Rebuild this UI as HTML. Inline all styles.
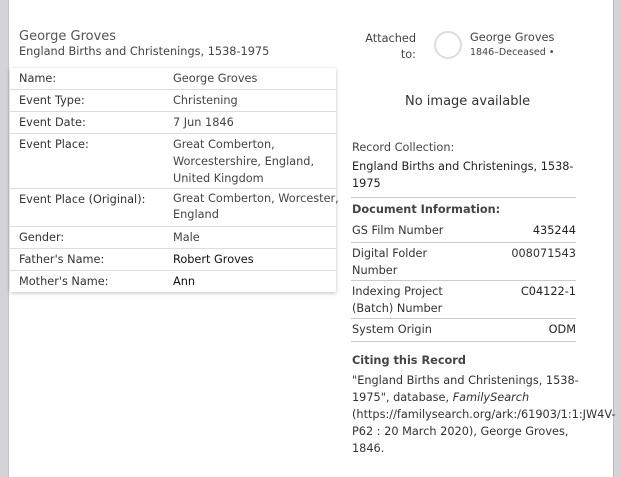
<!DOCTYPE html>
<html><head><style>
body{margin:0;width:621px;height:477px;overflow:hidden;background:#fff;font-family:"DejaVu Sans","Liberation Sans",sans-serif;font-size:11.3px;color:#333;position:relative}
.l{position:absolute;left:0;top:0;width:8px;height:477px;background:#d4d4d8;border-right:1px solid #c4c4c8}
.r{position:absolute;right:0;top:0;width:7px;height:477px;background:#d4d4d8;border-left:1px solid #bbb}
.a{position:absolute;white-space:nowrap}
.tbl{position:absolute;left:10px;top:68px;width:326px;box-shadow:0 1px 4px rgba(0,0,0,.25);background:#fff}
.row{position:relative;border-bottom:1px solid #ddd;line-height:18px;padding:2px 0 1px}
.row:last-child{border-bottom:none}
.row .k{position:absolute;left:9px;top:2px;white-space:nowrap}
.row .v{margin-left:163px;color:#444;white-space:nowrap}
.hr{position:absolute;left:351px;width:225px;border-top:1px solid #ccc}
</style></head><body>
<div class="l"></div><div class="r"></div>
<div class="a" style="left:19px;top:29px;font-size:13px;color:#555">George Groves</div>
<div class="a" style="left:19px;top:45px;color:#444">England Births and Christenings, 1538-1975</div>
<div class="tbl">
<div class="row"><span class="k">Name:</span><div class="v">George Groves</div></div>
<div class="row"><span class="k">Event Type:</span><div class="v">Christening</div></div>
<div class="row"><span class="k">Event Date:</span><div class="v">7 Jun 1846</div></div>
<div class="row"><span class="k">Event Place:</span><div class="v" style="line-height:17px">Great Comberton,<br>Worcestershire, England,<br>United Kingdom</div></div>
<div class="row"><span class="k">Event Place (Original):</span><div class="v" style="line-height:16px;padding-bottom:2px">Great Comberton, Worcester,<br>England</div></div>
<div class="row"><span class="k">Gender:</span><div class="v">Male</div></div>
<div class="row"><span class="k">Father's Name:</span><div class="v" style="color:#111">Robert Groves</div></div>
<div class="row"><span class="k">Mother's Name:</span><div class="v" style="color:#111">Ann</div></div>
</div>
<div class="a" style="left:362px;top:31px;width:54px;text-align:right;line-height:16px;color:#444">Attached<br>to:</div>
<div class="a" style="left:434px;top:31px;width:24px;height:24px;border:2px solid #ddd;border-radius:50%"></div>
<div class="a" style="left:470px;top:31px;color:#444">George Groves</div>
<div class="a" style="left:470px;top:47px;font-size:9.5px;color:#444">1846–Deceased •</div>
<div class="a" style="left:405px;top:94px;font-size:13px;color:#333">No image available</div>
<div class="a" style="left:352px;top:141px;color:#444">Record Collection:</div>
<div class="a" style="left:352px;top:158px;line-height:17px;color:#222">England Births and Christenings, 1538-<br>1975</div>
<div class="hr" style="top:197px"></div>
<div class="a" style="left:352px;top:203px;font-weight:bold;color:#444">Document Information:</div>
<div class="a" style="left:352px;top:224px">GS Film Number</div><div class="a" style="right:45px;top:224px;color:#222">435244</div>
<div class="hr" style="top:242px"></div>
<div class="a" style="left:352px;top:245px;line-height:17px">Digital Folder<br>Number</div><div class="a" style="right:45px;top:245px;line-height:17px">008071543</div>
<div class="hr" style="top:280px"></div>
<div class="a" style="left:352px;top:283px;line-height:17px">Indexing Project<br>(Batch) Number</div><div class="a" style="right:45px;top:283px;line-height:17px;color:#222">C04122-1</div>
<div class="hr" style="top:318px"></div>
<div class="a" style="left:352px;top:323px">System Origin</div><div class="a" style="right:45px;top:323px;color:#222">ODM</div>
<div class="hr" style="top:341px"></div>
<div class="a" style="left:352px;top:354px;font-weight:bold;color:#444">Citing this Record</div>
<div class="a" style="left:352px;top:372px;line-height:17px;color:#333">"England Births and Christenings, 1538-<br>1975", database, <i>FamilySearch</i><br>(https://familysearch.org/ark:/61903/1:1:JW4V-<br>P62 : 20 March 2020), George Groves,<br>1846.</div>
</body></html>
